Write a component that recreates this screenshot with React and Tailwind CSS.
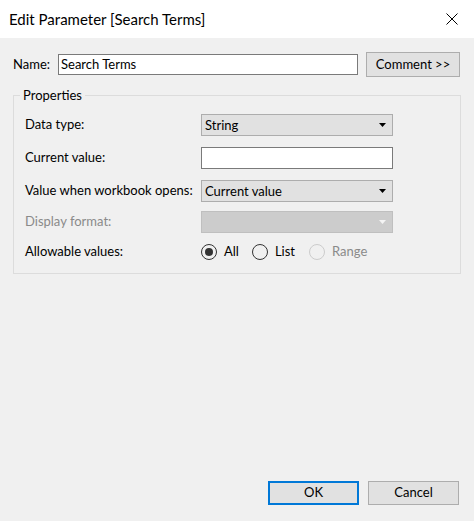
import React from "react";

const font = { fontFamily: 'Lato, "Noto Sans", sans-serif' };

function Arrow({ disabled }) {
  return (
    <svg width="7" height="4" viewBox="0 0 7 4" className="shrink-0">
      <path d="M0 0H7L3.5 4Z" fill={disabled ? "#f4f4f4" : "#000"} />
    </svg>
  );
}

function Select({ value, disabled }) {
  return (
    <div
      className={
        "flex h-[22px] w-[192px] items-center justify-between border pl-[3px] pr-[6px] " +
        (disabled ? "border-[#bfbfbf] bg-[#cccccc]" : "border-[#adadad] bg-[#e1e1e1]")
      }
    >
      <span className="whitespace-nowrap text-[13px] leading-none text-black">{value}</span>
      <Arrow disabled={disabled} />
    </div>
  );
}

function Radio({ label, checked, disabled }) {
  return (
    <div className="flex items-center">
      <div
        className={
          "flex h-[16px] w-[16px] items-center justify-center rounded-full border " +
          (disabled ? "border-[#cccccc]" : "border-[#333333]")
        }
      >
        {checked && <div className="h-[8px] w-[8px] rounded-full bg-[#333333]" />}
      </div>
      <span className={"ml-[7px] whitespace-nowrap text-[13px] " + (disabled ? "text-[#8a8a8a]" : "text-black")}>
        {label}
      </span>
    </div>
  );
}

function Row({ label, children, disabled }) {
  return (
    <div className="flex h-[22px] items-center">
      <span className={"w-[176px] whitespace-nowrap text-[13px] " + (disabled ? "text-[#8a8a8a]" : "text-black")}>
        {label}
      </span>
      {children}
    </div>
  );
}

export default function App() {
  return (
    <div className="flex h-[521px] w-[474px] flex-col bg-[#f0f0f0]" style={font}>
      <div className="flex h-[38px] items-center justify-between bg-white pl-[9px] pr-[16px]">
        <span className="whitespace-nowrap text-[15px] text-black">Edit Parameter [Search Terms]</span>
        <svg width="12" height="12" viewBox="0 0 12 12">
          <path d="M0.5 0.5L11.5 11.5M11.5 0.5L0.5 11.5" stroke="#000" strokeWidth="1" />
        </svg>
      </div>

      <div className="flex flex-1 flex-col px-[13px] pb-[16px] pt-[14px]">
        <div className="flex h-[25px] items-center pr-[1px]">
          <span className="w-[45px] text-[13px] text-black">Name:</span>
          <div className="flex h-[21px] w-[300px] items-center border border-[#7a7a7a] bg-white pl-[2px]">
            <span className="whitespace-nowrap text-[13px] text-black">Search Terms</span>
          </div>
          <div className="ml-[8px] flex h-[25px] flex-1 items-center justify-center border border-[#adadad] bg-[#e1e1e1]">
            <span className="whitespace-nowrap text-[13px] text-black">Comment &gt;&gt;</span>
          </div>
        </div>

        <fieldset className="mt-[9px] border border-[#dcdcdc] pl-[6px] pb-[10px]">
          <legend className="px-[3px] text-[13px] leading-[18px] text-black">Properties</legend>
          <div className="flex flex-col pl-[5px] pt-[10px]">
            <Row label="Data type:">
              <Select value="String" />
            </Row>
            <div className="mt-[11px]">
              <Row label="Current value:">
                <div className="h-[22px] w-[192px] border border-[#7a7a7a] bg-white" />
              </Row>
            </div>
            <div className="mt-[11px]">
              <Row label="Value when workbook opens:">
                <Select value="Current value" />
              </Row>
            </div>
            <div className="mt-[9px]">
              <Row label="Display format:" disabled>
                <Select value="" disabled />
              </Row>
            </div>
            <div className="mt-[8px] flex h-[22px] items-center">
              <span className="w-[176px] whitespace-nowrap text-[13px] text-black">Allowable values:</span>
              <Radio label="All" checked />
              <div className="ml-[13px]">
                <Radio label="List" />
              </div>
              <div className="ml-[14px]">
                <Radio label="Range" disabled />
              </div>
            </div>
          </div>
        </fieldset>

        <div className="mt-auto flex justify-end gap-[9px] pr-[2px]">
          <div className="flex h-[24px] w-[91px] items-center justify-center border-2 border-[#0078d7] bg-[#e1e1e1]">
            <span className="text-[13px] text-black">OK</span>
          </div>
          <div className="flex h-[24px] w-[91px] items-center justify-center border border-[#adadad] bg-[#e1e1e1]">
            <span className="text-[13px] text-black">Cancel</span>
          </div>
        </div>
      </div>
    </div>
  );
}
